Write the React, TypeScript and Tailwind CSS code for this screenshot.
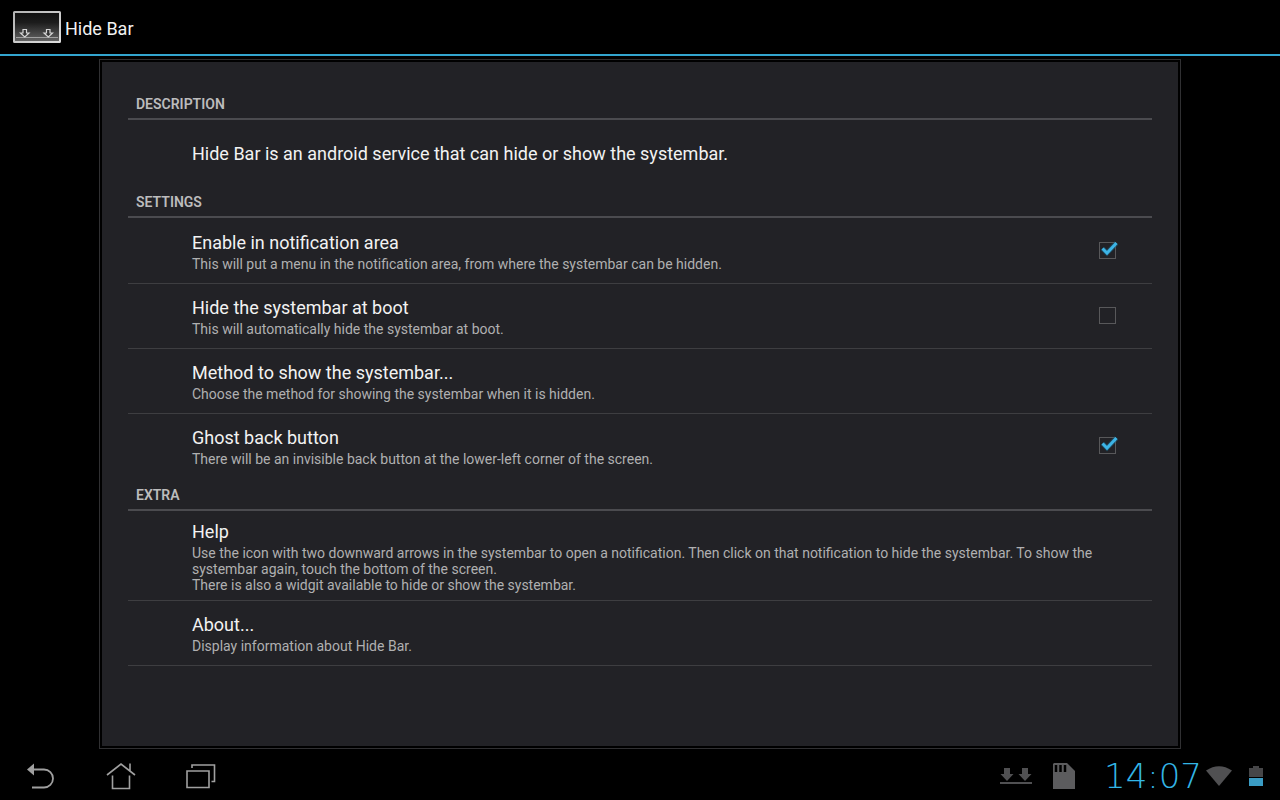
import { useState, type ReactNode } from "react";

function AppLogo() {
  return (
    <svg width="48" height="32" viewBox="0 0 48 32" aria-hidden="true">
      <defs>
        <linearGradient id="screen" x1="0" y1="0" x2="0" y2="1">
          <stop offset="0" stopColor="#101010" />
          <stop offset="0.35" stopColor="#1c1c1c" />
          <stop offset="1" stopColor="#686868" />
        </linearGradient>
        <linearGradient id="frame" x1="0" y1="0" x2="1" y2="1">
          <stop offset="0" stopColor="#b4b4b4" />
          <stop offset="1" stopColor="#dedede" />
        </linearGradient>
      </defs>
      <rect x="1" y="1" width="46" height="30" rx="0.5" fill="url(#screen)" stroke="url(#frame)" strokeWidth="2" />
      <path d="M3 26.500H45" stroke="#a0a0a0" />
      <path
        d="M10 18.500h3.500v3.500h2.500l-4.200 4-4.300-4h2.500zM33.500 18.500h3.500v3.500h2.500l-4.200 4-4.300-4h2.500z"
        fill="#333"
        stroke="#d6d6d6"
        strokeWidth="1.2"
      />
    </svg>
  );
}

function BackIcon() {
  return (
    <svg width="28" height="26" viewBox="0 0 28 26" aria-hidden="true">
      <path d="M6 6.500H17a9 9 0 0 1 0 18H5" fill="none" stroke="#a0a0a0" strokeWidth="1.8" />
      <path d="M0 6.500 7 0.500V12.500z" fill="#a0a0a0" />
    </svg>
  );
}

function HomeIcon() {
  return (
    <svg width="30" height="28" viewBox="0 0 30 28" fill="none" stroke="#a0a0a0" strokeWidth="1.6" aria-hidden="true">
      <path d="M1 13 15 2 29 13M24 8.500V1.500M6.500 13.500V26.500H23.500V13.500" />
    </svg>
  );
}

function RecentIcon() {
  return (
    <svg width="30" height="26" viewBox="0 0 30 26" fill="none" stroke="#a0a0a0" strokeWidth="1.6" aria-hidden="true">
      <path d="M1 8H23V24.500H1zM6 5V2H28.500V18.500H25.500" />
    </svg>
  );
}

function HideBarIcon() {
  return (
    <svg width="32" height="18" viewBox="0 0 32 18" fill="#505052" aria-hidden="true">
      <path d="M4 1H10V7H13.500L7 14 0.500 7H4zM22 1H28V7H31.500L25 14 18.500 7H22zM0 15H32V17H0z" />
    </svg>
  );
}

function SdCardIcon() {
  return (
    <svg width="24" height="28" viewBox="0 0 24 28" aria-hidden="true">
      <path d="M2 1H15L23 9V27H1V2z" fill="#5c5c5e" />
      <path d="M4 3V10M8.500 3V10M13 3V10" stroke="#000" strokeWidth="2.500" />
    </svg>
  );
}

function WifiIcon() {
  return (
    <svg width="26" height="20" viewBox="0 0 26 20" aria-hidden="true">
      <path d="M0 4.500Q13-4 26 4.500L13 20z" fill="#505052" />
    </svg>
  );
}

function BatteryIcon() {
  return (
    <svg width="14" height="22" viewBox="0 0 14 22" aria-hidden="true">
      <path d="M4 1H10V3H14V12H0V3H4z" fill="#464648" />
      <path d="M0 13H14V21H0z" fill="#3a9cc4" />
    </svg>
  );
}

function Section({ title, children }: { title: string; children: ReactNode }) {
  return (
    <section>
      <h2 className="mb-px flex h-[33px] items-center border-b-2 border-[#4b4b4f] px-2 pt-0.5 text-sm font-semibold text-[#bcbcbd]">
        {title}
      </h2>
      {children}
    </section>
  );
}

function RowText({ title, summary, extra }: { title: string; summary: string; extra?: string }) {
  return (
    <span className="block flex-1 py-px">
      <span className="block text-lg leading-6 text-[#f2f2f2]">{title}</span>
      <span className="mt-px block text-sm leading-4 text-[#b0b0b1]">
        {summary}
        {extra && <span className="block">{extra}</span>}
      </span>
    </span>
  );
}

function CheckRow({ title, summary, initial, divider = true }: { title: string; summary: string; initial: boolean; divider?: boolean }) {
  const [checked, setChecked] = useState(initial);
  return (
    <label className={`flex min-h-16 cursor-pointer items-center pr-9 pl-16 ${divider ? "box-content border-b border-[#3e3e41]" : ""}`}>
      <RowText title={title} summary={summary} />
      <span className="relative mb-0.5 flex">
        <input
          type="checkbox"
          checked={checked}
          onChange={(e) => setChecked(e.target.checked)}
          className="size-[17px] appearance-none border border-[#58585a]"
        />
        {checked && (
          <svg className="pointer-events-none absolute -top-1 left-0" width="22" height="20" viewBox="0 0 22 20" fill="none" aria-hidden="true">
            <path d="M3.500 10.500 8 15 17.500 5" stroke="#1c6384" strokeOpacity="0.5" strokeWidth="5" />
            <path d="M3.500 10.500 8 15 17.500 5" stroke="#3cb4e6" strokeWidth="3" />
          </svg>
        )}
      </span>
    </label>
  );
}

function ActionRow({ title, summary, extra }: { title: string; summary: string; extra?: string }) {
  return (
    <button
      type="button"
      className="flex min-h-[65px] w-full cursor-pointer items-center border-b border-[#3e3e41] pt-[7px] pb-1.5 pr-9 pl-16 text-left"
    >
      <RowText title={title} summary={summary} extra={extra} />
    </button>
  );
}

const navClass = "flex h-12 w-20 cursor-pointer items-center justify-center";

export default function App() {
  return (
    <div className="flex min-h-screen flex-col bg-black font-['Roboto',sans-serif]">
      <header className="flex h-14 items-center gap-1 border-b-2 border-[#33a5cf] px-[13px]">
        <AppLogo />
        <h1 className="pt-[3px] text-lg text-[#f2f2f2]">Hide Bar</h1>
      </header>

      <main className="mx-auto my-[3px] flex w-[85%] max-w-[1082px] flex-1 border border-[#303032] p-0.5">
        <div className="flex-1 bg-[#222226] px-[26px] pt-[25px] pb-6">
          <Section title="DESCRIPTION">
            <p className="flex min-h-16 items-center px-16 pt-0.5 text-lg leading-6 text-[#f2f2f2]">
              Hide Bar is an android service that can hide or show the systembar.
            </p>
          </Section>
          <Section title="SETTINGS">
            <CheckRow
              title="Enable in notification area"
              summary="This will put a menu in the notification area, from where the systembar can be hidden."
              initial={true}
            />
            <CheckRow
              title="Hide the systembar at boot"
              summary="This will automatically hide the systembar at boot."
              initial={false}
            />
            <ActionRow
              title="Method to show the systembar..."
              summary="Choose the method for showing the systembar when it is hidden."
            />
            <CheckRow
              title="Ghost back button"
              summary="There will be an invisible back button at the lower-left corner of the screen."
              initial={true}
              divider={false}
            />
          </Section>
          <Section title="EXTRA">
            <ActionRow
              title="Help"
              summary="Use the icon with two downward arrows in the systembar to open a notification. Then click on that notification to hide the systembar. To show the systembar again, touch the bottom of the screen."
              extra="There is also a widgit available to hide or show the systembar."
            />
            <ActionRow title="About..." summary="Display information about Hide Bar." />
          </Section>
        </div>
      </main>

      <footer className="flex h-12 items-center justify-between pr-[17px] pl-px">
        <nav className="flex" aria-label="System">
          <button type="button" aria-label="Back" className={navClass}>
            <BackIcon />
          </button>
          <button type="button" aria-label="Home" className={navClass}>
            <HomeIcon />
          </button>
          <button type="button" aria-label="Recent apps" className={navClass}>
            <RecentIcon />
          </button>
        </nav>
        <div className="flex items-center">
          <HideBarIcon />
          <span className="ml-5 flex">
            <SdCardIcon />
          </span>
          <time className="ml-6 w-[106px] text-center font-['DejaVu_Sans',sans-serif] text-[34px] leading-8 font-extralight text-[#33b5e5]">
            14:07
          </time>
          <WifiIcon />
          <span className="ml-[17px] flex">
            <BatteryIcon />
          </span>
        </div>
      </footer>
    </div>
  );
}
